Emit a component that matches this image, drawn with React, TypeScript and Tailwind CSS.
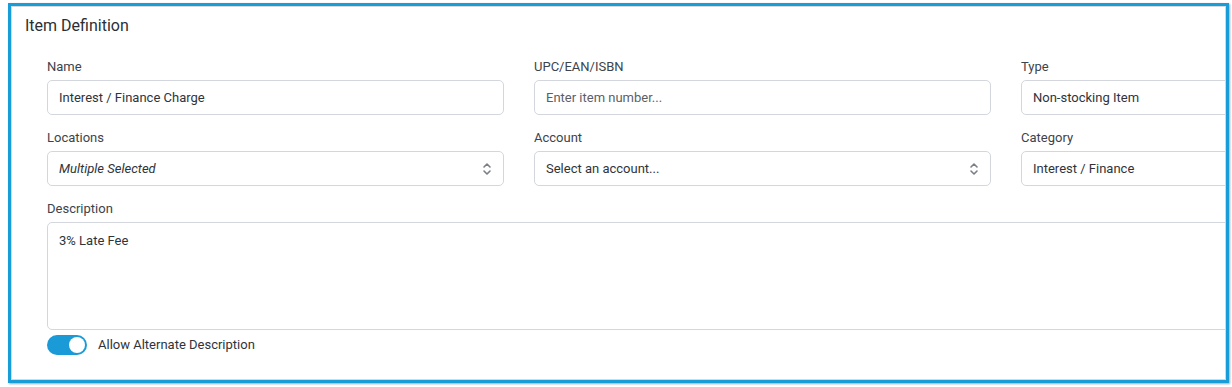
import { useState } from "react";

function UpDown() {
  return (
    <svg width="10" height="16" viewBox="0 0 10 16" fill="none" stroke="#7a7f87" strokeWidth="1.6" strokeLinecap="round" strokeLinejoin="round">
      <path d="M2 6 L5 3 L8 6" />
      <path d="M2 10 L5 13 L8 10" />
    </svg>
  );
}

function Field({ label, children }: { label: string; children: React.ReactNode }) {
  return (
    <div className="flex flex-col">
      <label className="h-[16px] text-[13px] leading-[16px] text-[#3d434b]">{label}</label>
      <div className="mt-[5px]">{children}</div>
    </div>
  );
}

function TextBox({ value, placeholder, italic }: { value?: string; placeholder?: string; italic?: boolean }) {
  return (
    <div className="flex h-[35px] items-center rounded-[5px] border border-[#d3d7dd] bg-white px-[11px] text-[13px]">
      <span className={`${italic ? "italic" : ""} ${value ? "text-[#2f343a]" : "text-[#5a5f66]"}`}>
        {value || placeholder}
      </span>
    </div>
  );
}

function SelectBox({ value, italic }: { value: string; italic?: boolean }) {
  return (
    <div className="flex h-[35px] items-center justify-between rounded-[5px] border border-[#d3d7dd] bg-white pl-[11px] pr-[11px] text-[13px]">
      <span className={`text-[#2f343a] ${italic ? "italic" : ""}`}>{value}</span>
      <UpDown />
    </div>
  );
}

export default function App() {
  const [alt, setAlt] = useState(true);
  return (
    <div className="h-[387px] w-[1232px] bg-white pl-[8px] pt-[3px]" style={{ fontFamily: "Roboto, 'Liberation Sans', sans-serif" }}>
      <div className="h-[380px] w-[1221px] border-[3px] border-[#189dd8] shadow-[1px_1px_2px_rgba(0,0,0,0.35)]">
        <div className="h-full w-full overflow-hidden border border-[#d6d8dc] bg-white">
          <h2 className="pl-[13px] pt-[9px] text-[16px] leading-[20px] text-[#2b2f35]">Item Definition</h2>

          <div className="grid w-max grid-cols-[457px_457px_457px] gap-x-[30px] gap-y-[15px] pl-[35px] pt-[23px]">
            <Field label="Name">
              <TextBox value="Interest / Finance Charge" />
            </Field>
            <Field label="UPC/EAN/ISBN">
              <TextBox placeholder="Enter item number..." />
            </Field>
            <Field label="Type">
              <TextBox value="Non-stocking Item" />
            </Field>

            <Field label="Locations">
              <SelectBox value="Multiple Selected" italic />
            </Field>
            <Field label="Account">
              <SelectBox value="Select an account..." />
            </Field>
            <Field label="Category">
              <TextBox value="Interest / Finance" />
            </Field>

            <div className="col-span-3">
              <Field label="Description">
                <div className="h-[108px] rounded-[5px] border border-[#d3d7dd] bg-white px-[11px] pt-[10px] text-[13px] leading-[16px] text-[#2f343a]">
                  3% Late Fee
                </div>
              </Field>
            </div>
          </div>

          <div className="mt-[5px] flex items-center gap-[11px] pl-[35px]">
            <button
              type="button"
              onClick={() => setAlt(!alt)}
              className={`flex h-[20px] w-[40px] items-center rounded-full p-[2px] ${alt ? "justify-end bg-[#1a9bd7]" : "justify-start bg-[#c9cdd3]"}`}
            >
              <span className="h-[16px] w-[16px] rounded-full bg-white" />
            </button>
            <span className="text-[13px] text-[#2f343a]">Allow Alternate Description</span>
          </div>
        </div>
      </div>
    </div>
  );
}
